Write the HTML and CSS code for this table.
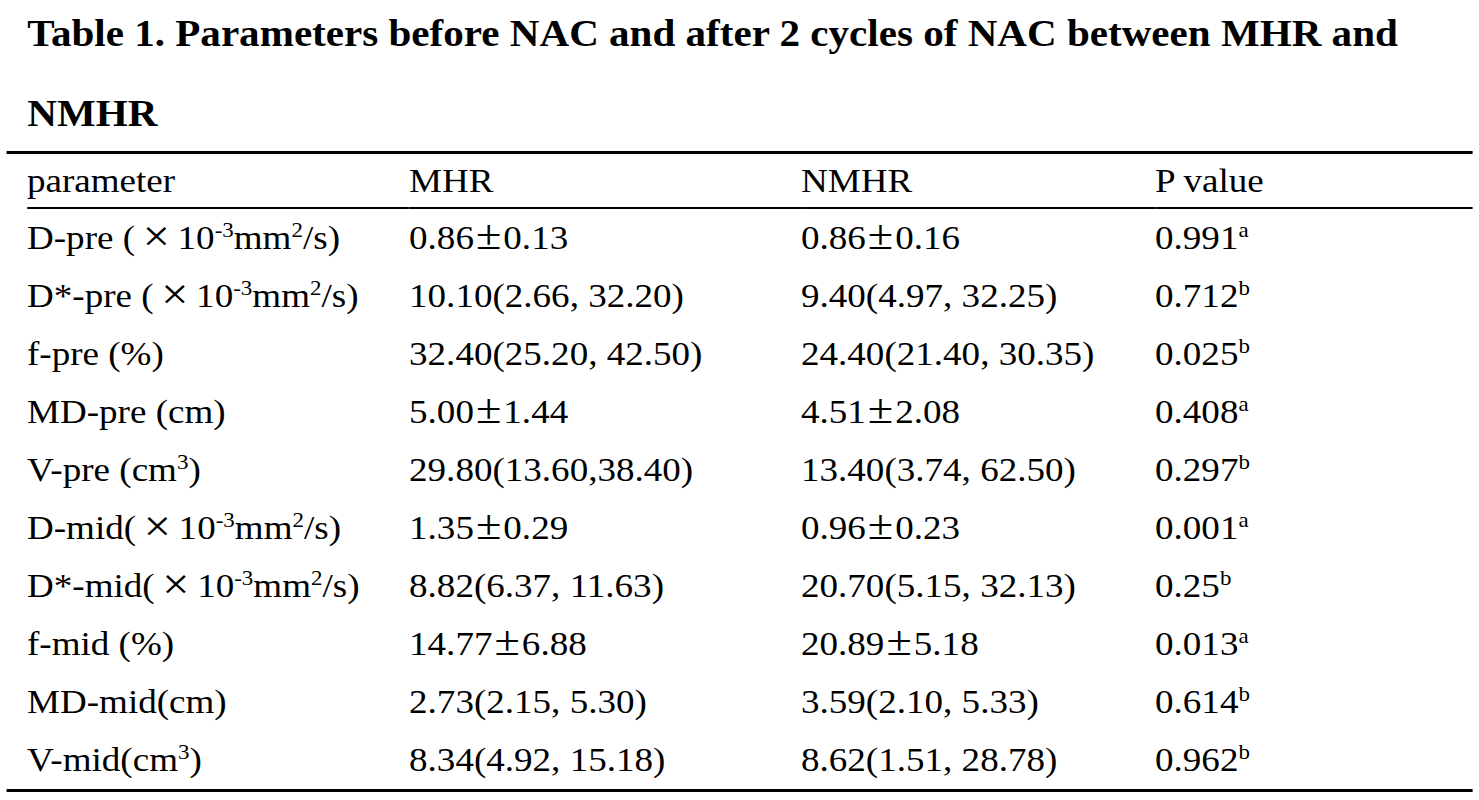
FILE: index.html
```html
<!DOCTYPE html>
<html lang="en">
<head>
<meta charset="utf-8">
<title>Table 1</title>
<link rel="stylesheet" href="styles.css">
</head>
<body>
<div class="page">
  <h1 class="title">Table 1. Parameters before NAC and after 2 cycles of NAC between MHR and NMHR</h1>
  <div class="table-wrap">
    <table class="data">
      <colgroup>
        <col class="c1"><col class="c2"><col class="c3"><col class="c4">
      </colgroup>
      <thead>
        <tr><th>parameter</th><th>MHR</th><th>NMHR</th><th>P value</th></tr>
      </thead>
      <tbody>
        <tr>
          <td>D-pre (<span class="x">×</span>10<sup class="sup">-3</sup>mm<sup class="sup">2</sup>/s)</td>
          <td>0.86<span class="pm">±</span>0.13</td>
          <td>0.86<span class="pm">±</span>0.16</td>
          <td>0.991<sup class="sup">a</sup></td>
        </tr>
        <tr>
          <td>D*-pre (<span class="x">×</span>10<sup class="sup">-3</sup>mm<sup class="sup">2</sup>/s)</td>
          <td>10.10(2.66, 32.20)</td>
          <td>9.40(4.97, 32.25)</td>
          <td>0.712<sup class="sup">b</sup></td>
        </tr>
        <tr>
          <td>f-pre (%)</td>
          <td>32.40(25.20, 42.50)</td>
          <td>24.40(21.40, 30.35)</td>
          <td>0.025<sup class="sup">b</sup></td>
        </tr>
        <tr>
          <td>MD-pre (cm)</td>
          <td>5.00<span class="pm">±</span>1.44</td>
          <td>4.51<span class="pm">±</span>2.08</td>
          <td>0.408<sup class="sup">a</sup></td>
        </tr>
        <tr>
          <td>V-pre (cm<sup class="sup">3</sup>)</td>
          <td>29.80(13.60,38.40)</td>
          <td>13.40(3.74, 62.50)</td>
          <td>0.297<sup class="sup">b</sup></td>
        </tr>
        <tr>
          <td>D-mid(<span class="x">×</span>10<sup class="sup">-3</sup>mm<sup class="sup">2</sup>/s)</td>
          <td>1.35<span class="pm">±</span>0.29</td>
          <td>0.96<span class="pm">±</span>0.23</td>
          <td>0.001<sup class="sup">a</sup></td>
        </tr>
        <tr>
          <td>D*-mid(<span class="x">×</span>10<sup class="sup">-3</sup>mm<sup class="sup">2</sup>/s)</td>
          <td>8.82(6.37, 11.63)</td>
          <td>20.70(5.15, 32.13)</td>
          <td>0.25<sup class="sup">b</sup></td>
        </tr>
        <tr>
          <td>f-mid (%)</td>
          <td>14.77<span class="pm">±</span>6.88</td>
          <td>20.89<span class="pm">±</span>5.18</td>
          <td>0.013<sup class="sup">a</sup></td>
        </tr>
        <tr>
          <td>MD-mid(cm)</td>
          <td>2.73(2.15, 5.30)</td>
          <td>3.59(2.10, 5.33)</td>
          <td>0.614<sup class="sup">b</sup></td>
        </tr>
        <tr>
          <td>V-mid(cm<sup class="sup">3</sup>)</td>
          <td>8.34(4.92, 15.18)</td>
          <td>8.62(1.51, 28.78)</td>
          <td>0.962<sup class="sup">b</sup></td>
        </tr>
      </tbody>
    </table>
  </div>
</div>
</body>
</html>
```

FILE: styles.css
```css
html, body {
  margin: 0;
  padding: 0;
  background: #ffffff;
}

body {
  font-family: "Liberation Serif", "Times New Roman", Times, serif;
  color: #000000;
  width: 1479px;
  height: 800px;
  overflow: hidden;
}

/* the source image is stretched horizontally by ~9% */
.page {
  display: flex;
  flex-direction: column;
  width: 1357px;
  transform: scaleX(1.09);
  transform-origin: 0 0;
}

.title {
  margin: -7px 0 0 0;
  padding-left: 25px;
  font-size: 37.7px;
  font-weight: bold;
  line-height: 80px;
}

.table-wrap {
  margin: -2px 0 0 6.4px;
  width: 1345px;
  box-sizing: border-box;
  padding-left: 18.4px;
  border-top: 3px solid #000;
  border-bottom: 3px solid #000;
}

.data {
  width: 100%;
  table-layout: fixed;
  border-collapse: separate;
  border-spacing: 0;
  font-size: 34px;
}

.c1 { width: 350.5px; }
.c2 { width: 359.6px; }
.c3 { width: 324.8px; }
.c4 { width: auto; }

.data th,
.data td {
  padding: 0;
  text-align: left;
  white-space: nowrap;
  vertical-align: baseline;
}

.data th {
  font-weight: normal;
  line-height: 53px;
  border-bottom: 2px solid #000;
}

.data td {
  line-height: 58px;
}

.sup {
  font-size: 0.62em;
  vertical-align: 0.55em;
  line-height: 0;
}

.pm {
  display: inline-block;
  width: 27px;
  text-align: center;
  font-size: 1.25em;
  line-height: 1;
}

.x {
  display: inline-block;
  width: 39px;
  text-align: center;
  font-size: 1.3em;
  line-height: 1;
  vertical-align: -0.04em;
}
```
